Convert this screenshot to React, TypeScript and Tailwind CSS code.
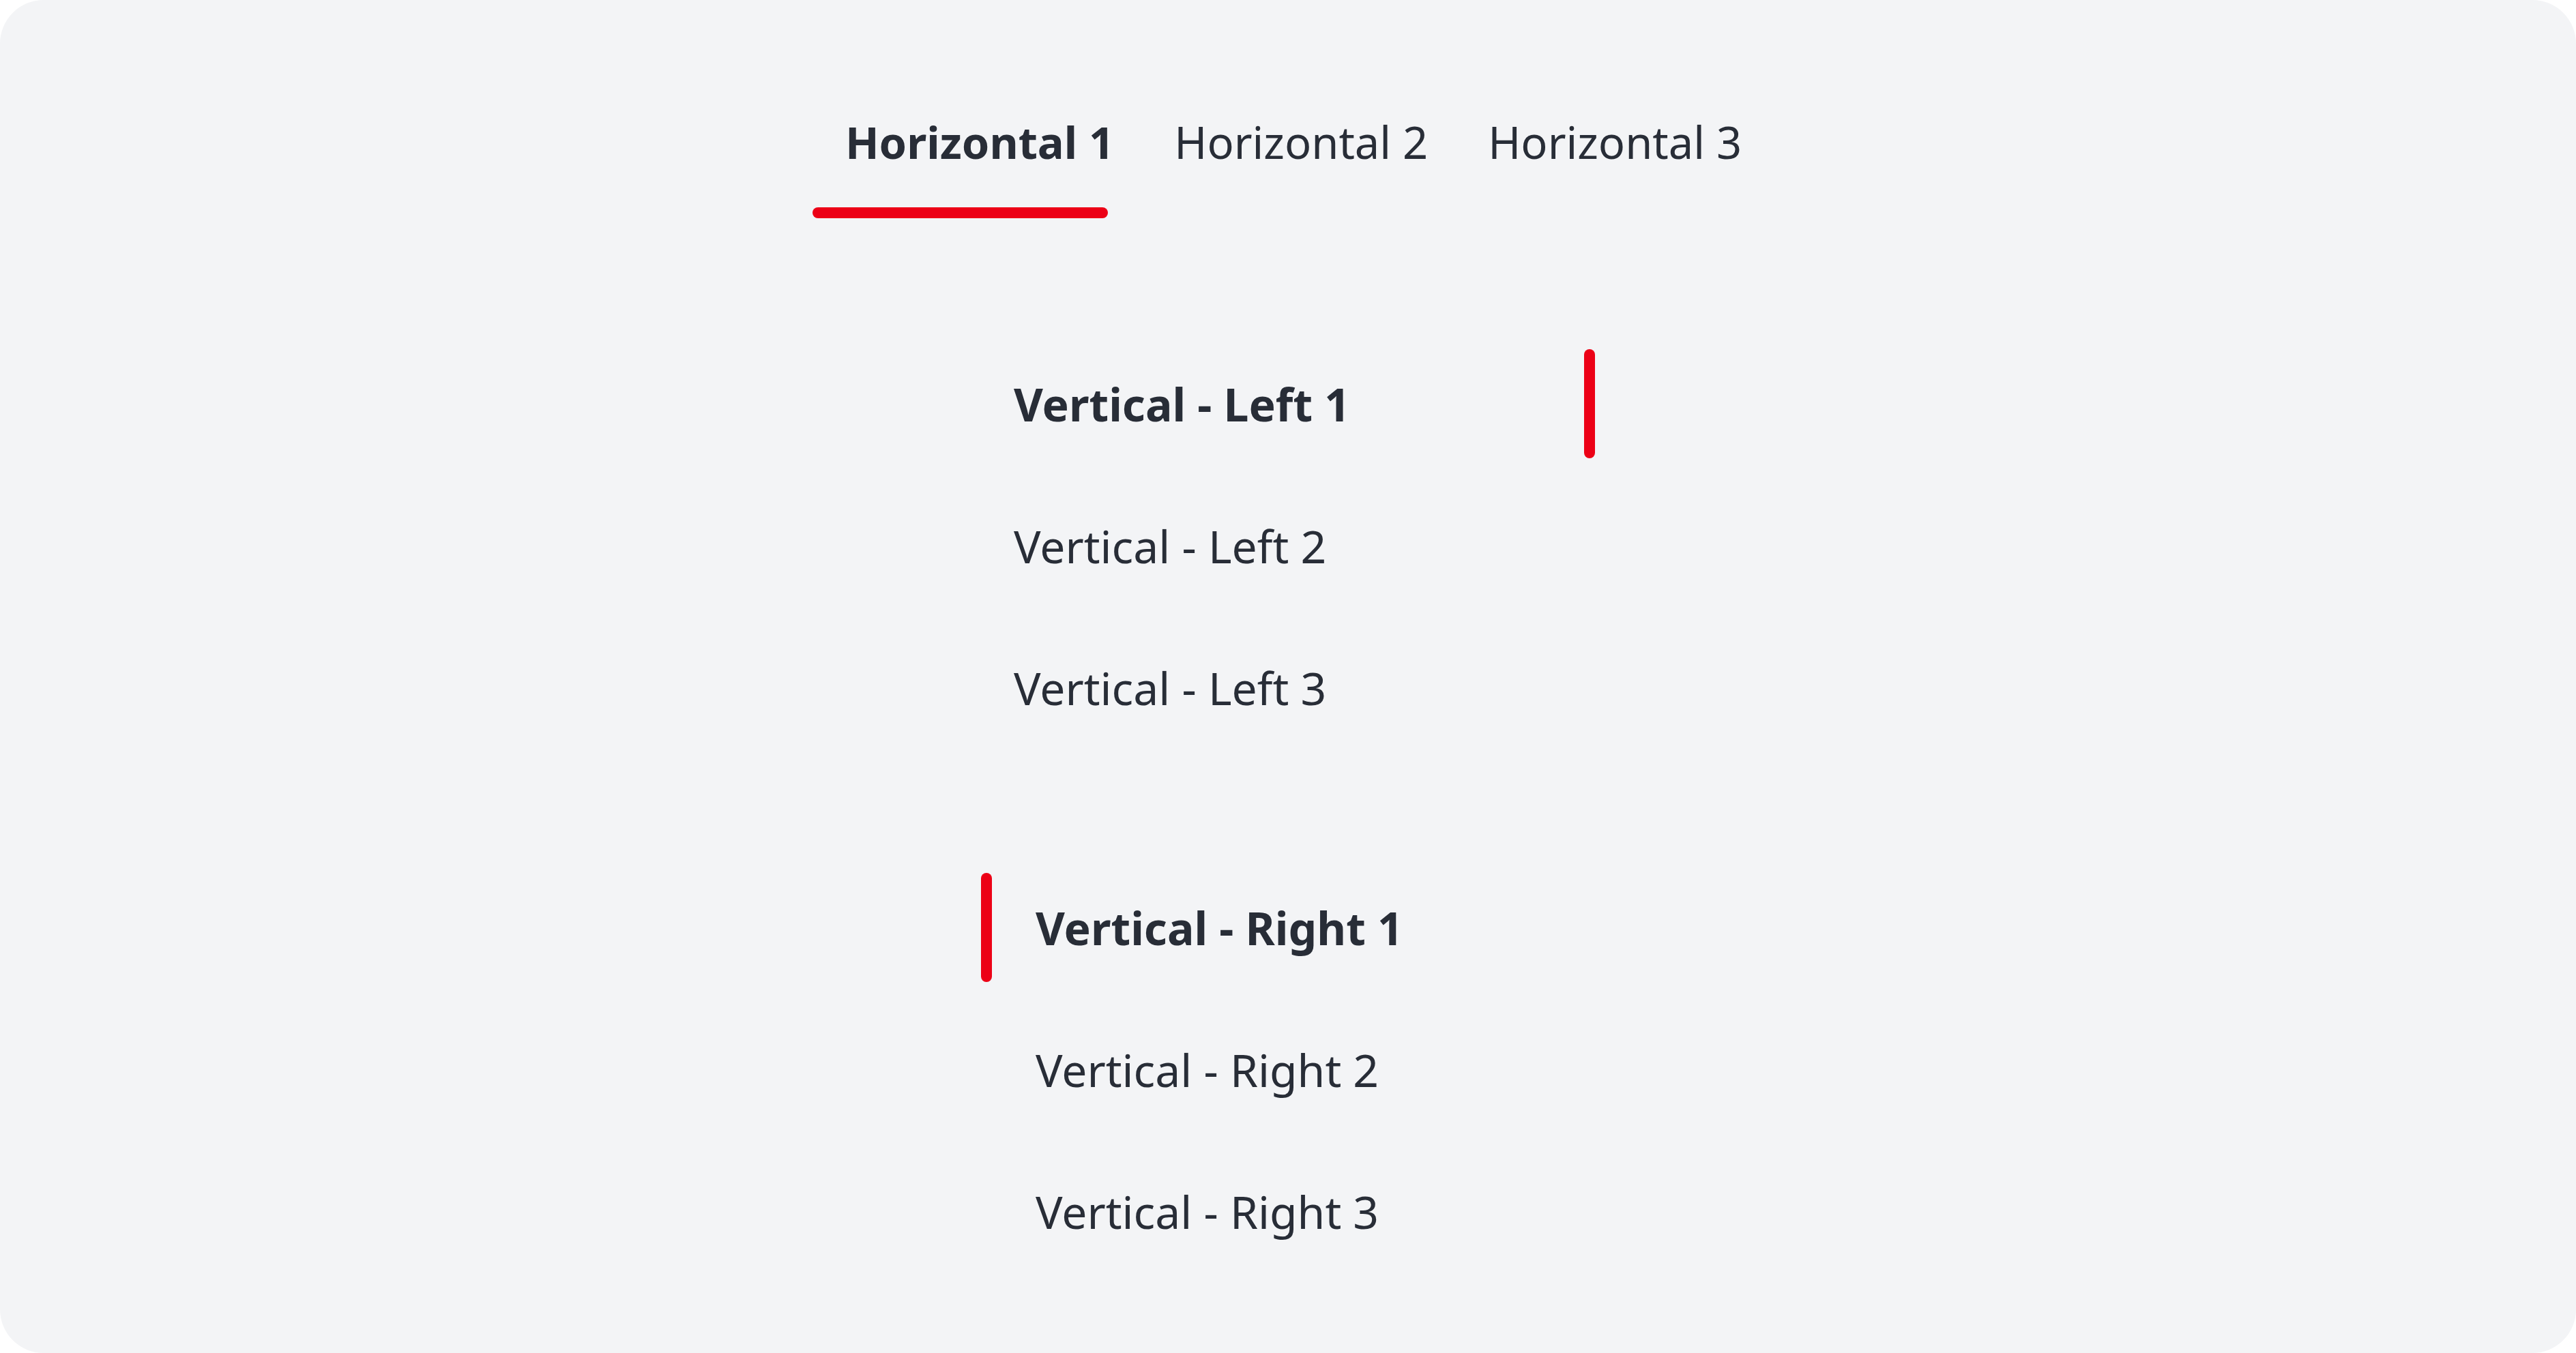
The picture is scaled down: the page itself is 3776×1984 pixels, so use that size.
const TABS = ["Horizontal 1", "Horizontal 2", "Horizontal 3"];
const LEFT_ITEMS = ["Vertical - Left 1", "Vertical - Left 2", "Vertical - Left 3"];
const RIGHT_ITEMS = ["Vertical - Right 1", "Vertical - Right 2", "Vertical - Right 3"];

const font = { fontFamily: '"Noto Sans", "Open Sans", sans-serif' };

function HorizontalTabs() {
  return (
    <nav className="flex items-start pl-[8px] pt-[160px]">
      {TABS.map((label, i) => {
        const active = i === 0;
        return (
          <div key={label} className="flex flex-col">
            <span
              className={`pl-[48px] pr-[40px] text-[65px] leading-[96px] whitespace-nowrap text-[#282d37] ${
                active ? "font-bold" : "font-normal"
              }`}
            >
              {label}
            </span>
            {active ? (
              <span className="mt-[48px] h-[16px] w-[433px] rounded-full bg-[#ec0016]" />
            ) : null}
          </div>
        );
      })}
    </nav>
  );
}

function VerticalLeft() {
  return (
    <ul className="mt-[192px] flex w-[900px] flex-col gap-[48px]">
      {LEFT_ITEMS.map((label, i) => {
        const active = i === 0;
        return (
          <li key={label} className="flex h-[160px] items-center justify-between pl-[48px]">
            <span
              className={`text-[66px] leading-[96px] whitespace-nowrap text-[#282d37] ${
                active ? "font-bold" : "font-normal"
              }`}
            >
              {label}
            </span>
            <span className={`h-[160px] w-[16px] rounded-full ${active ? "bg-[#ec0016]" : "bg-transparent"}`} />
          </li>
        );
      })}
    </ul>
  );
}

function VerticalRight() {
  return (
    <ul className="mt-[192px] flex w-[900px] flex-col gap-[48px]">
      {RIGHT_ITEMS.map((label, i) => {
        const active = i === 0;
        return (
          <li key={label} className="flex h-[160px] items-center">
            <span className={`h-[160px] w-[16px] rounded-full ${active ? "bg-[#ec0016]" : "bg-transparent"}`} />
            <span
              className={`pl-[64px] text-[66px] leading-[96px] whitespace-nowrap text-[#282d37] ${
                active ? "font-bold" : "font-normal"
              }`}
            >
              {label}
            </span>
          </li>
        );
      })}
    </ul>
  );
}

export default function App() {
  return (
    <div className="h-[1984px] w-[3776px] bg-white" style={font}>
      <div className="flex h-full w-full flex-col items-center rounded-[64px] bg-[#f3f4f6]">
        <HorizontalTabs />
        <VerticalLeft />
        <VerticalRight />
      </div>
    </div>
  );
}
